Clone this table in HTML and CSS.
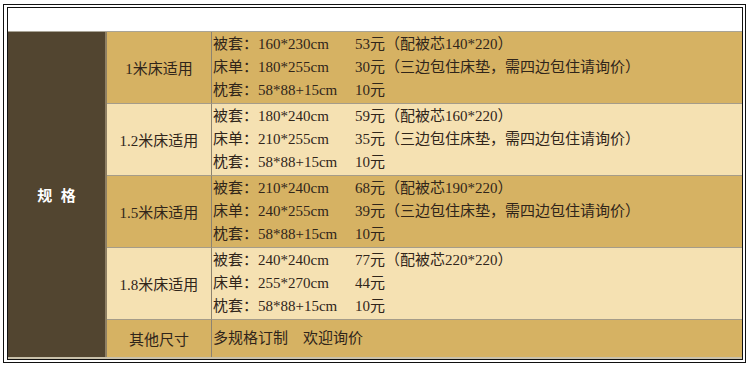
FILE: index.html
```
<!DOCTYPE html>
<html lang="zh">
<head>
<meta charset="utf-8">
<title>规格</title>
<link rel="stylesheet" href="styles.css">
</head>
<body>
<div class="frame">
  <div class="inner">
    <div class="header"></div>
    <div class="spec">
      <div class="title">规 格</div>

      <div class="size gold">1米床适用</div>
      <div class="items gold">
        <div class="line"><span class="item">被套：160*230cm</span><span>53元（配被芯140*220）</span></div>
        <div class="line"><span class="item">床单：180*255cm</span><span>30元（三边包住床垫，需四边包住请询价）</span></div>
        <div class="line"><span class="item">枕套：58*88+15cm</span><span>10元</span></div>
      </div>

      <div class="size light">1.2米床适用</div>
      <div class="items light">
        <div class="line"><span class="item">被套：180*240cm</span><span>59元（配被芯160*220）</span></div>
        <div class="line"><span class="item">床单：210*255cm</span><span>35元（三边包住床垫，需四边包住请询价）</span></div>
        <div class="line"><span class="item">枕套：58*88+15cm</span><span>10元</span></div>
      </div>

      <div class="size gold">1.5米床适用</div>
      <div class="items gold">
        <div class="line"><span class="item">被套：210*240cm</span><span>68元（配被芯190*220）</span></div>
        <div class="line"><span class="item">床单：240*255cm</span><span>39元（三边包住床垫，需四边包住请询价）</span></div>
        <div class="line"><span class="item">枕套：58*88+15cm</span><span>10元</span></div>
      </div>

      <div class="size light">1.8米床适用</div>
      <div class="items light">
        <div class="line"><span class="item">被套：240*240cm</span><span>77元（配被芯220*220）</span></div>
        <div class="line"><span class="item">床单：255*270cm</span><span>44元</span></div>
        <div class="line"><span class="item">枕套：58*88+15cm</span><span>10元</span></div>
      </div>

      <div class="size gold last">其他尺寸</div>
      <div class="items gold last">
        <div class="line">多规格订制　欢迎询价</div>
      </div>
    </div>
  </div>
</div>
</body>
</html>
```
FILE: styles.css
```
html, body {
  margin: 0;
  padding: 0;
  background: #fff;
}
body {
  font-family: "Liberation Serif", "Noto Sans CJK SC", serif;
  font-size: 15px;
  color: #30251a;
}
.frame {
  margin: 4px 0 0 3px;
  width: 736px;
  height: 353px;
  border: 1px solid #111;
  padding: 2px 2px 2px 3px;
  box-sizing: content-box;
}
.inner {
  border: 1px solid #111;
  height: 351px;
  display: flex;
  flex-direction: column;
}
.header {
  height: 23px;
  background: #fff;
}
.spec {
  flex: 1;
  display: grid;
  grid-template-columns: 99px 105px 1fr;
  grid-template-rows: 72px 72px 72px 72px 1fr;
  border-top: 1px solid #a9a496;
  border-bottom: 2px solid #c9c1ab;
}
.title {
  grid-row: 1 / 6;
  grid-column: 1;
  background: #524530;
  border-right: 2px solid #8f8064;
  color: #fff;
  font-weight: bold;
  font-family: "Noto Sans CJK SC", sans-serif;
  display: flex;
  align-items: center;
  justify-content: center;
  word-spacing: 5px;
}
.gold { background: #d6b263; }
.light { background: #f5e1b2; }
.size {
  display: flex;
  align-items: center;
  justify-content: center;
  border-bottom: 1px solid #a59c89;
  border-right: 1px solid #8d8370;
}
.items {
  display: flex;
  flex-direction: column;
  justify-content: center;
  padding-left: 1px;
  border-bottom: 1px solid #a59c89;
}
.last { border-bottom: none; }
.line {
  display: flex;
  line-height: 23px;
  white-space: nowrap;
}
.item {
  width: 142px;
}
```
